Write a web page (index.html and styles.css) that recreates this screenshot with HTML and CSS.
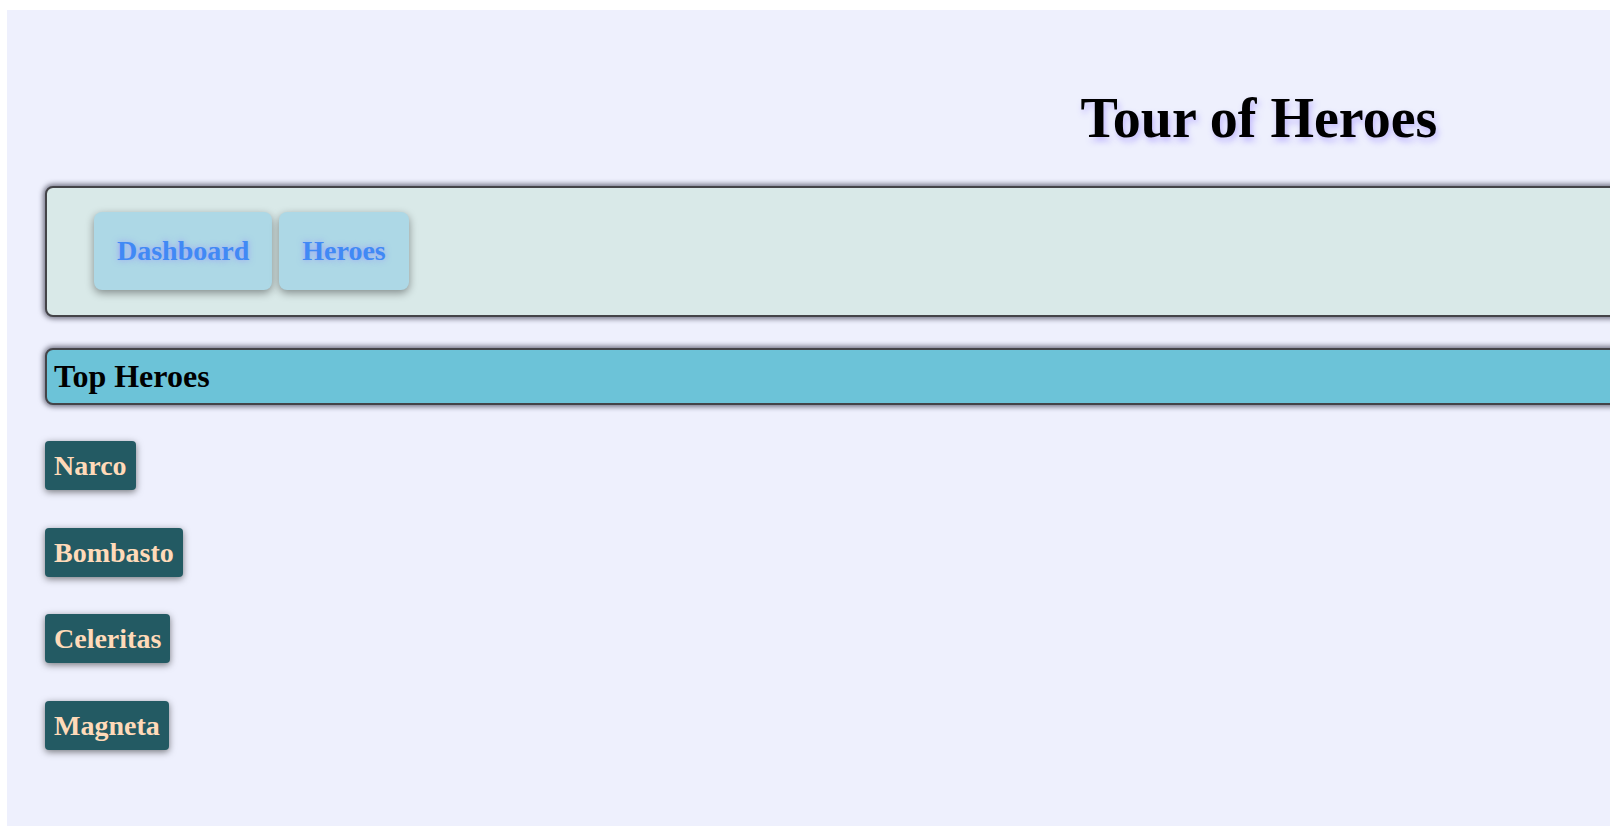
FILE: index.html
```html
<!DOCTYPE html>
<html lang="en">
<head>
<meta charset="utf-8">
<title>Tour of Heroes</title>
<link rel="stylesheet" href="styles.css">
</head>
<body>
<div class="page">
  <h1 class="title">Tour of Heroes</h1>
  <nav class="nav">
    <a class="nav-btn" href="#">Dashboard</a>
    <a class="nav-btn" href="#">Heroes</a>
  </nav>
  <h2 class="section-title">Top Heroes</h2>
  <div class="hero-list">
    <a class="hero" href="#">Narco</a>
    <a class="hero" href="#">Bombasto</a>
    <a class="hero" href="#">Celeritas</a>
    <a class="hero" href="#">Magneta</a>
  </div>
</div>
</body>
</html>
```
FILE: styles.css
```css
html {
  overflow: hidden;
  background: #ffffff;
}
body {
  margin: 10px 0 0 7px;
  font-family: "Liberation Serif", "Times New Roman", serif;
}
.page {
  width: 2504px;
  height: 816px;
  box-sizing: border-box;
  background: #eef0fd;
  padding: 77px 38px 0 38px;
  display: flex;
  flex-direction: column;
}
.title {
  margin: 0;
  font-size: 56px;
  font-weight: bold;
  line-height: 62px;
  text-align: center;
  color: #000;
  text-shadow: 2px 4px 6px rgba(110, 80, 255, 0.35);
}
.nav {
  margin-top: 37px;
  display: flex;
  gap: 7px;
  padding: 24px 47px 25px;
  background: #d9e9e8;
  border: 2px solid #444448;
  border-radius: 8px;
  box-shadow: 0 0 5px 2px rgba(40, 40, 60, 0.6);
}
.nav-btn {
  display: block;
  padding: 23px;
  font-size: 28px;
  line-height: 32px;
  font-weight: bold;
  color: #4189f5;
  text-decoration: none;
  background: #add8e6;
  border-radius: 8px;
  text-shadow: 0 0 6px rgba(140, 120, 255, 0.6);
  box-shadow: 0 3px 9px rgba(0, 0, 0, 0.4);
}
.section-title {
  margin: 31px 0 0;
  padding: 8px 9px 8px 7px;
  font-size: 32px;
  line-height: 37px;
  font-weight: bold;
  color: #000;
  background: #6cc3d8;
  border: 2px solid #444448;
  border-radius: 8px;
  box-shadow: 0 0 5px 2px rgba(40, 40, 60, 0.6);
}
.hero-list {
  margin-top: 36px;
  display: flex;
  flex-direction: column;
  align-items: flex-start;
  gap: 37.5px;
}
.hero {
  display: block;
  padding: 9px 9px 8px;
  font-size: 28px;
  line-height: 32px;
  font-weight: bold;
  color: #ffdab9;
  text-decoration: none;
  background: #235a63;
  border-radius: 4px;
  box-shadow: 0 2px 7px rgba(0, 0, 0, 0.5);
}
```
